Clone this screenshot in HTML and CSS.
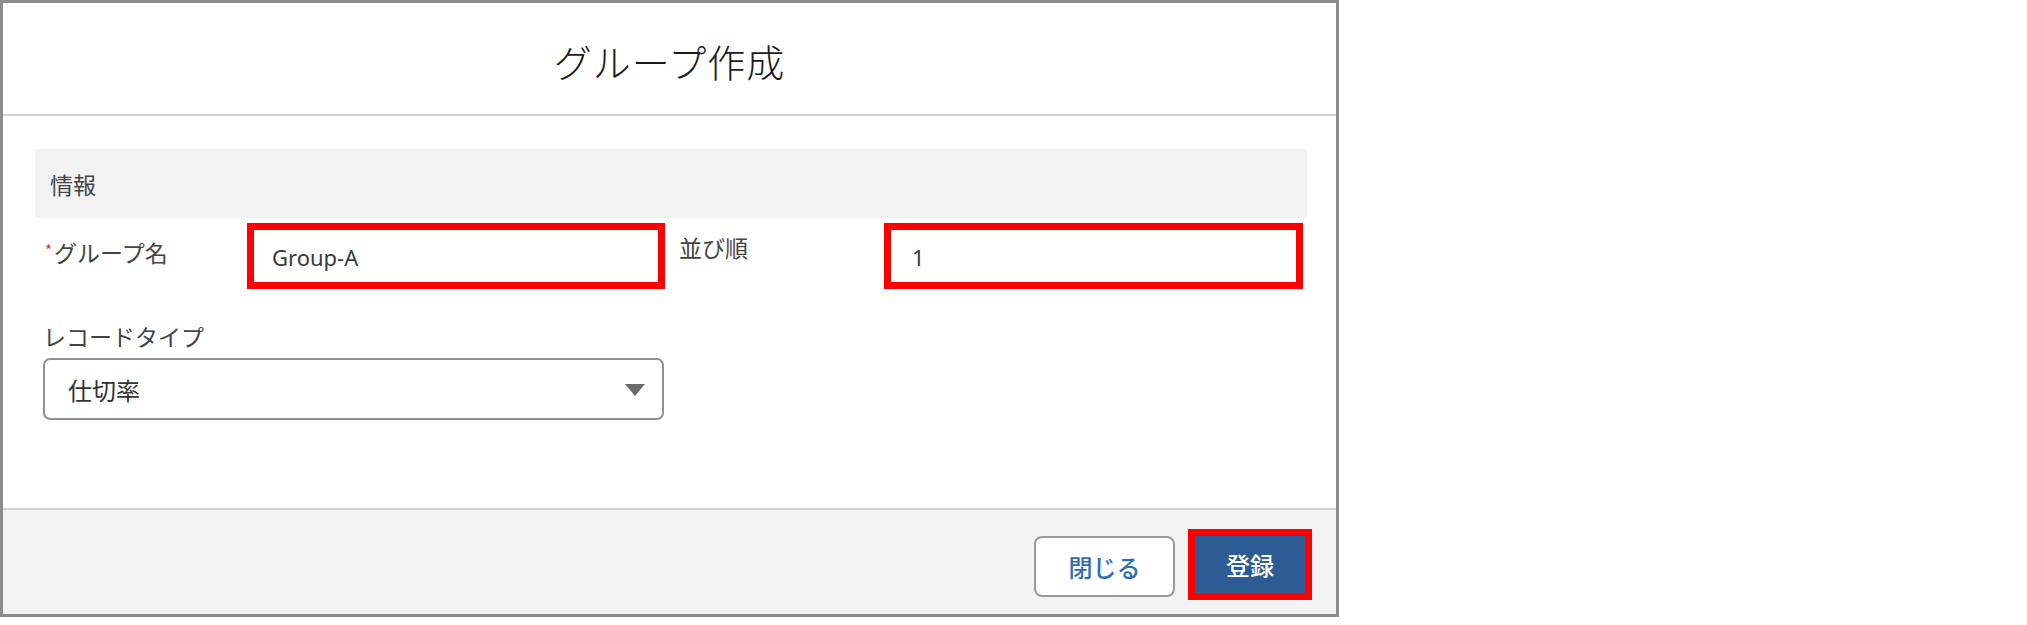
FILE: index.html
```html
<!DOCTYPE html>
<html lang="ja">
<head>
<meta charset="utf-8">
<title>グループ作成</title>
<link rel="stylesheet" href="styles.css">
</head>
<body>
<div class="dialog">
  <header class="dlg-header">
    <h1 class="dlg-title">グループ作成</h1>
  </header>
  <section class="dlg-body">
    <div class="band"><span class="band-label">情報</span></div>
    <div class="row">
      <label class="lbl lbl-first"><span class="req">*</span>グループ名</label>
      <div class="field field-name"><span class="val">Group-A</span></div>
      <label class="lbl lbl-second">並び順</label>
      <div class="field field-order"><span class="val">1</span></div>
    </div>
    <div class="row2">
      <label class="lbl">レコードタイプ</label>
      <div class="select">
        <span class="select-val">仕切率</span>
        <svg class="caret" width="20" height="12" viewBox="0 0 20 12"><path d="M0 0 H20 L10 12 Z" fill="#6b6b6b"/></svg>
      </div>
    </div>
  </section>
  <footer class="dlg-footer">
    <button class="btn btn-neutral">閉じる</button>
    <div class="hl"><button class="btn btn-brand">登録</button></div>
  </footer>
</div>
</body>
</html>
```
FILE: styles.css
```css
html, body {
  margin: 0;
  padding: 0;
  background: #ffffff;
}
body {
  font-family: "Noto Sans CJK JP", "Noto Sans", sans-serif;
  color: #444444;
}
.dialog {
  width: 1333px;
  height: 611px;
  border: 3px solid #8c8c8c;
  display: flex;
  flex-direction: column;
  background: #ffffff;
}
.dlg-header {
  height: 111px;
  border-bottom: 2px solid #cfcfcf;
  display: flex;
  align-items: center;
  justify-content: center;
}
.dlg-title {
  margin: 0;
  padding-top: 4px;
  font-size: 38px;
  font-weight: 300;
  color: #1c1c1c;
  letter-spacing: 1px;
}
.dlg-body {
  flex: 1;
  padding: 33px 29px 0 32px;
}
.band {
  height: 69px;
  background: #f3f3f3;
  display: flex;
  align-items: center;
  padding-left: 15px;
}
.band-label {
  font-size: 23px;
  color: #444444;
}
.row {
  display: flex;
  margin-top: 5px;
  height: 66px;
}
.lbl {
  font-size: 23px;
  line-height: 33px;
  color: #444444;
}
.lbl-first {
  margin-left: 10px;
  width: 202px;
  padding-top: 10px;
}
.req {
  color: #c23934;
  font-size: 15px;
  vertical-align: 6px;
  margin-right: 2px;
}
.lbl-second {
  margin-left: 14px;
  width: 205px;
  padding-top: 8px;
}
.field {
  box-sizing: border-box;
  height: 66px;
  border: 7px solid #ff0000;
  background: #ffffff;
  display: flex;
  align-items: center;
}
.field-name {
  width: 418px;
  padding-left: 18px;
}
.field-order {
  width: 419px;
  padding-left: 21px;
}
.val {
  font-family: "Noto Sans", "Open Sans", sans-serif;
  font-size: 22px;
  color: #3a3a3a;
  padding-top: 2px;
}
.row2 {
  margin-left: 8px;
  margin-top: 31px;
  display: flex;
  flex-direction: column;
}
.select {
  margin-top: 5px;
  box-sizing: border-box;
  width: 621px;
  height: 62px;
  border: 2px solid #909090;
  border-radius: 7px;
  display: flex;
  align-items: center;
  justify-content: space-between;
  padding: 0 17px 0 23px;
}
.select-val {
  font-size: 24px;
  color: #333333;
}
.caret {
  display: block;
  margin-top: 2px;
}
.dlg-footer {
  height: 106px;
  border-top: 2px solid #cfcfcf;
  background: #f3f3f3;
  display: flex;
  justify-content: flex-end;
  align-items: flex-start;
  padding-right: 24px;
  box-sizing: border-box;
}
.btn {
  font-family: "Noto Sans CJK JP", sans-serif;
  font-size: 24px;
  font-weight: 500;
  cursor: pointer;
  margin: 0;
}
.btn-neutral {
  margin-top: 26px;
  width: 141px;
  height: 61px;
  border: 2px solid #9a9a9a;
  border-radius: 8px;
  background: #ffffff;
  color: #2f6db5;
}
.hl {
  margin-top: 19px;
  margin-left: 13px;
  border: 7px solid #ff0000;
  width: 110px;
  height: 57px;
}
.btn-brand {
  display: block;
  width: 110px;
  height: 57px;
  border: none;
  background: #2d5b94;
  color: #ffffff;
}
```
